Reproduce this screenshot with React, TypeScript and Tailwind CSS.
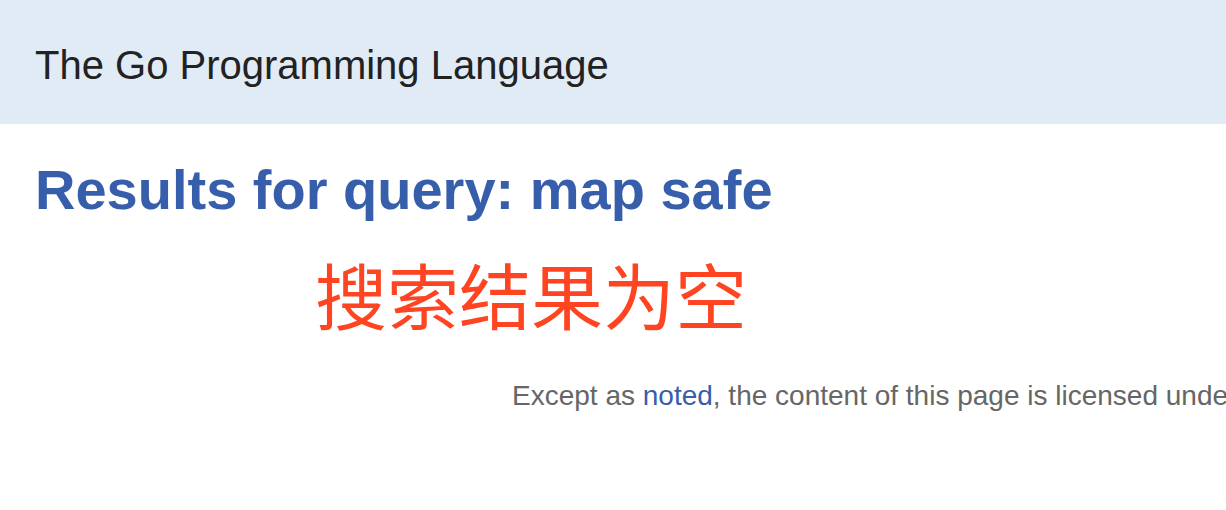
export default function App() {
  return (
    <div className="w-[1226px] h-[510px] overflow-hidden bg-white font-['Liberation_Sans',Arial,sans-serif]">
      {/* Top bar */}
      <div className="h-[124px] bg-[#e0ebf5] flex items-center pl-[35px] pt-[5px]">
        <span className="text-[40px] text-[#222222] leading-none">The Go Programming Language</span>
      </div>

      {/* Results */}
      <div className="pl-[35px] pt-[38px]">
        <h1 className="text-[56px] font-bold text-[#375eab] leading-none">Results for query: map safe</h1>
        <div className="pl-[280px] mt-[39px] text-[72px] leading-none text-[#ff4422] font-['Noto_Sans_CJK_SC',sans-serif]">
          搜索结果为空
        </div>
      </div>

      {/* Footer */}
      <div className="pl-[512px] mt-[46px] whitespace-nowrap text-[28px] text-[#666666]">
        Except as <a className="text-[#375eab]">noted</a>, the content of this page is licensed under the Creative
        Commons Attribution 3.0 License, and code is licensed under a BSD license.
      </div>
    </div>
  )
}
